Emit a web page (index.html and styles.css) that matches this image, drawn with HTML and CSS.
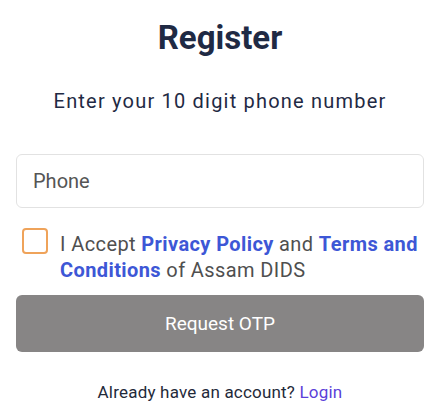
FILE: index.html
```html
<!DOCTYPE html>
<html lang="en">
<head>
    <meta charset="UTF-8">
    <meta name="viewport" content="width=device-width, initial-scale=1.0">
    <title>Register</title>
    <link rel="stylesheet" href="styles.css">
</head>
<body>
    <div class="register">
        <h1>Register</h1>
        <p class="subtitle">Enter your 10 digit phone number</p>

        <form id="registerForm">
            <input type="tel" class="phone-input" placeholder="Phone">

            <label class="accept">
                <span class="checkbox"></span>
                <span class="accept-text">I Accept <a href="#">Privacy Policy</a> and <a href="#">Terms and Conditions</a> of Assam DIDS</span>
            </label>

            <button type="submit" class="otp-button">Request OTP</button>
        </form>

        <p class="login-line">Already have an account? <a href="#">Login</a></p>
    </div>
</body>
</html>
```

FILE: styles.css
```css
body {
    font-family: Roboto, "Noto Sans", sans-serif;
    margin: 0;
    padding: 0;
    background-color: #fff;
}

.register {
    padding: 0 16px;
}

.register h1 {
    font-size: 33px;
    font-weight: 700;
    color: #1f2a44;
    text-align: center;
    margin: 17px 0 0;
    line-height: 42px;
}

.subtitle {
    font-size: 20px;
    color: #1f2a44;
    text-align: center;
    letter-spacing: 1.2px;
    margin: 28px 0 0;
    line-height: 28px;
}

#registerForm {
    margin-top: 39px;
}

.phone-input {
    display: block;
    box-sizing: border-box;
    width: 100%;
    height: 54px;
    padding: 0 16px;
    font-family: inherit;
    font-size: 20px;
    border: 1px solid #e2e2e2;
    border-radius: 6px;
    outline: none;
}

.phone-input::placeholder {
    color: #555;
}

.accept {
    display: flex;
    align-items: flex-start;
    gap: 12px;
    margin-top: 20px;
    padding-left: 6px;
}

.checkbox {
    flex: none;
    box-sizing: border-box;
    width: 26px;
    height: 26px;
    border: 2px solid #efa35a;
    border-radius: 4px;
}

.accept-text {
    font-size: 20px;
    line-height: 26px;
    color: #4f4f4f;
    letter-spacing: 0.4px;
    margin-top: 3px;
}

.accept-text a {
    color: #3d57d6;
    font-weight: 700;
    text-decoration: none;
}

.otp-button {
    display: block;
    width: 100%;
    height: 57px;
    margin-top: 12px;
    background-color: #878585;
    color: #fff;
    font-family: inherit;
    font-size: 19px;
    font-weight: 400;
    border: none;
    border-radius: 6px;
}

.login-line {
    text-align: center;
    font-size: 17px;
    letter-spacing: 0.2px;
    color: #1f2a3a;
    margin: 30px 0 0;
}

.login-line a {
    color: #5b3fd9;
    text-decoration: none;
}
```
